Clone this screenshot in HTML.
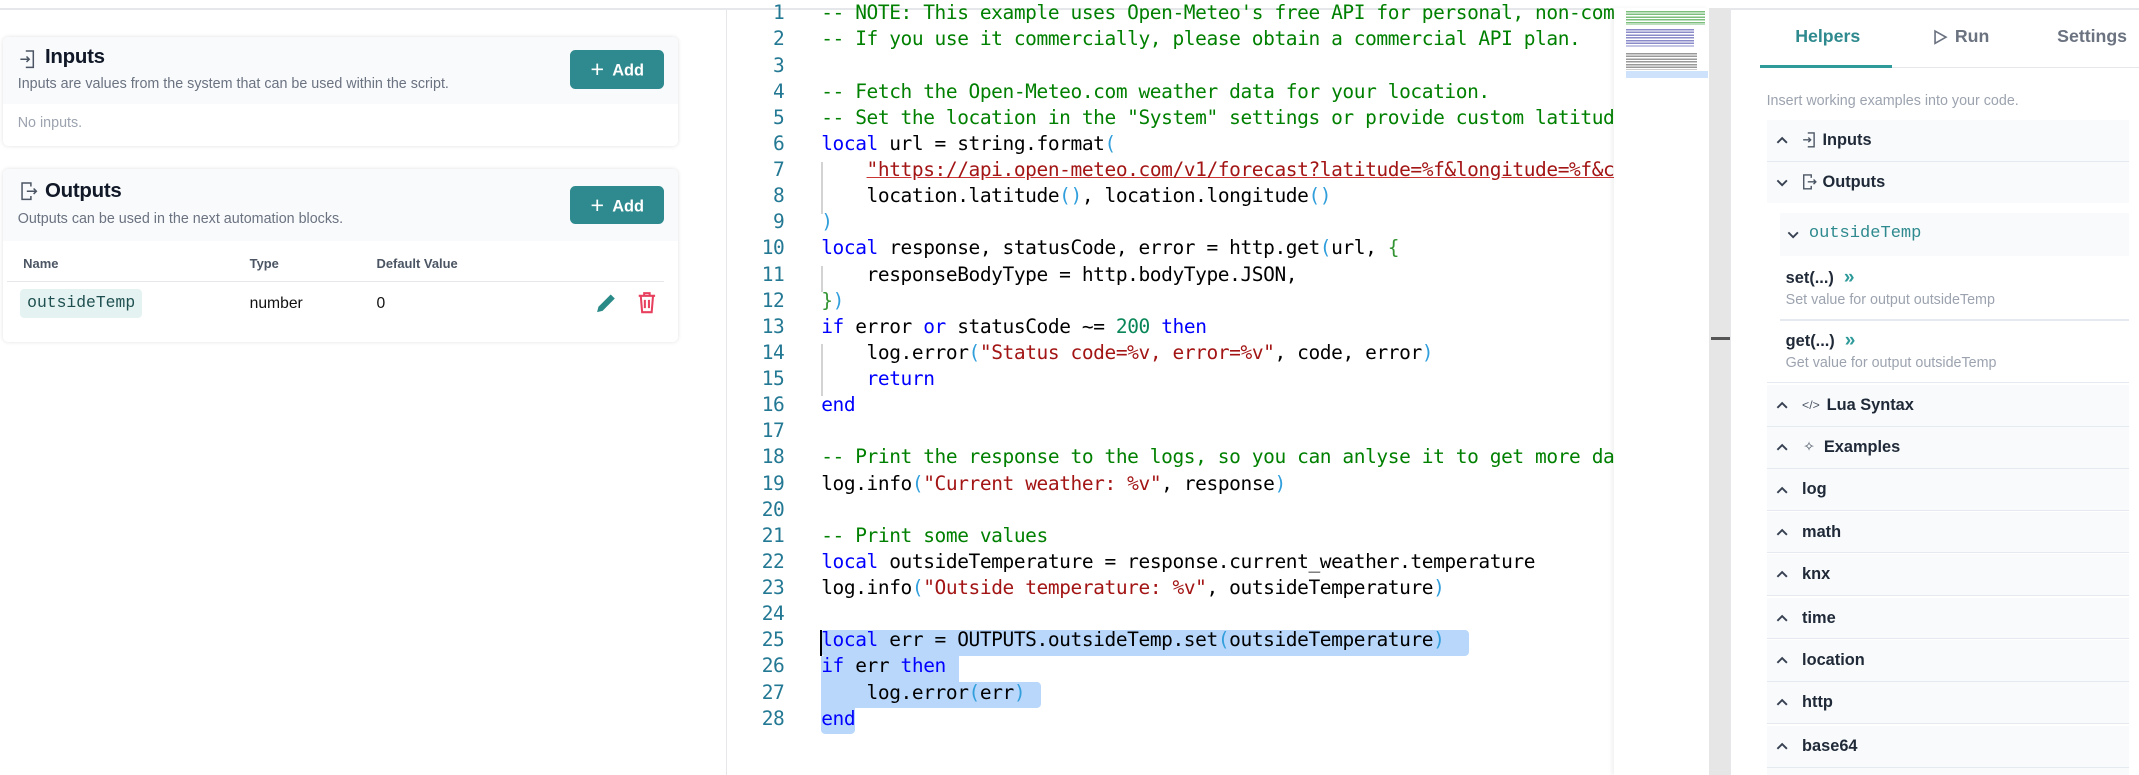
<!DOCTYPE html>
<html><head><meta charset="utf-8">
<style>
html,body{margin:0;padding:0;background:#fff;overflow:hidden}
body{width:2139px;height:775px}
#r{zoom:1.36416;width:1568px;height:568px;position:relative;font-family:"Liberation Sans",Arial,sans-serif;color:#1f2937}
.a{position:absolute}
.card{position:absolute;left:2px;width:495px;background:#fff;border-radius:4px;box-shadow:0 0 3px rgba(0,0,0,.12);overflow:hidden}
.ch{background:#f8fafc;position:relative}
.title{position:absolute;left:13px;font-size:15px;font-weight:600;color:#111827;letter-spacing:-.2px}
.sub{position:absolute;left:11px;font-size:10.5px;color:#6b7280}
.btn{position:absolute;left:416px;width:69px;height:28px;background:#2e8a8e;border-radius:4px;color:#fff;font-size:12px;font-weight:700;line-height:28px;text-align:center}
.btn span{font-size:17px;font-weight:400;vertical-align:-1px;margin-right:6px}
.code{position:absolute;left:533px;top:0;width:650px;height:568px;overflow:hidden;font-family:"DejaVu Sans Mono","Liberation Mono",monospace;font-size:14.3px;letter-spacing:-0.3px}
.ln{position:absolute;left:0;width:42px;text-align:right;color:#237893}
.cl{position:absolute;left:69px;white-space:pre;color:#000}
.c{color:#008000}.k{color:#0000ff}.s{color:#a31515}.n{color:#098658}.b{color:#319fdc}.b2{color:#319331}
.sel{position:absolute;left:602px;background:#b9d7fb;height:19px}
.guide{position:absolute;left:602px;width:1px;background:#d3d3d3}
.acc{position:absolute;left:1295px;width:266px;height:30px;background:#f8fafc;border-bottom:1px solid #e5eaf0;font-size:12px;font-weight:700;color:#1f2937;line-height:30px}
.acc .t{position:absolute;left:26px}
.up,.dn{position:absolute;left:7px;top:12px}
</style></head><body><div id="r">
<div class="a" style="left:0;top:6px;width:1568px;height:1px;background:#e5e7eb"></div>
<div class="a" style="left:532px;top:6px;width:1px;height:562px;background:#e5e7eb"></div>

<div class="card" style="top:27px;height:80px">
 <div class="ch" style="height:49px">
  <svg class="a" style="left:12px;top:9px" width="13" height="15" viewBox="0 0 13 15" fill="none" stroke="#4b5563" stroke-width="1.1"><path d="M5 1.5h5.5v12H5M1 7.5h6.5M5.5 5.5l2 2-2 2"/></svg>
  <div class="title" style="left:31px;top:6px">Inputs</div>
  <div class="sub" style="top:29px">Inputs are values from the system that can be used within the script.</div>
  <div class="btn" style="top:10px"><span>+</span>Add</div>
 </div>
 <div class="sub" style="top:57px;color:#9ca3af">No inputs.</div>
</div>

<div class="card" style="top:124px;height:127px">
 <div class="ch" style="height:53px">
  <svg class="a" style="left:13px;top:9px" width="13" height="15" viewBox="0 0 13 15" fill="none" stroke="#4b5563" stroke-width="1.1"><path d="M8 4V1.5H1.5v12H8V11M5 7.5h7M10 5.5l2 2-2 2"/></svg>
  <div class="title" style="left:31px;top:7px">Outputs</div>
  <div class="sub" style="top:31px">Outputs can be used in the next automation blocks.</div>
  <div class="btn" style="top:12px"><span>+</span>Add</div>
 </div>
 <div class="a" style="left:15px;top:64px;font-size:9.5px;font-weight:700;color:#4b5563">Name</div>
 <div class="a" style="left:181px;top:64px;font-size:9.5px;font-weight:700;color:#4b5563">Type</div>
 <div class="a" style="left:274px;top:64px;font-size:9.5px;font-weight:700;color:#4b5563">Default Value</div>
 <div class="a" style="left:3px;top:82px;width:482px;height:1px;background:#e5e7eb"></div>
 <div class="a" style="left:13px;top:88px;width:89px;height:21px;background:#e4f3f1;border-radius:3px;font-family:'Liberation Mono',monospace;font-size:12px;line-height:21px;text-align:center;color:#1f4f50">outsideTemp</div>
 <div class="a" style="left:181px;top:92px;font-size:11.5px;color:#111">number</div>
 <div class="a" style="left:274px;top:92px;font-size:11.5px;color:#111">0</div>
 <svg class="a" style="left:433px;top:88px" width="18" height="20" viewBox="0 0 18 20"><path d="M3 17l1-4 9-9 3 3-9 9z" fill="#2a8a88"/></svg>
 <svg class="a" style="left:464px;top:88px" width="16" height="20" viewBox="0 0 16 20" fill="none" stroke="#e8405f" stroke-width="1.5"><path d="M2 5h12M6 5V3h4v2M3.5 5l1 12h7l1-12M6.5 8v6M9.5 8v6"/></svg>
</div>

<div class="sel" style="top:462px;width:475px;border-radius:3px"></div>
<div class="sel" style="top:481px;width:101px"></div>
<div class="sel" style="top:500px;width:161px;border-radius:0 3px 3px 0"></div>
<div class="sel" style="top:519px;width:25px;border-radius:0 0 3px 3px"></div>
<div class="guide" style="top:119px;height:38px"></div>
<div class="guide" style="top:195px;height:19px"></div>
<div class="guide" style="top:252px;height:38px"></div>
<div class="a" style="left:601px;top:462px;width:1.5px;height:19px;background:#000"></div>
<div class="code" id="code"></div>
<script>
var L=[
'<span class="c">-- NOTE: This example uses Open-Meteo\'s free API for personal, non-commercial use.</span>',
'<span class="c">-- If you use it commercially, please obtain a commercial API plan.</span>',
'',
'<span class="c">-- Fetch the Open-Meteo.com weather data for your location.</span>',
'<span class="c">-- Set the location in the "System" settings or provide custom latitude</span>',
'<span class="k">local</span> url = string.format<span class="b">(</span>',
'    <span class="s" style="text-decoration:underline;text-decoration-color:#c33">"https://api.open-meteo.com/v1/forecast?latitude=%f&amp;longitude=%f&amp;current</span>',
'    location.latitude<span class="b">()</span>, location.longitude<span class="b">()</span>',
'<span class="b">)</span>',
'<span class="k">local</span> response, statusCode, error = http.get<span class="b">(</span>url, <span class="b2">{</span>',
'    responseBodyType = http.bodyType.JSON,',
'<span class="b2">}</span><span class="b">)</span>',
'<span class="k">if</span> error <span class="k">or</span> statusCode ~= <span class="n">200</span> <span class="k">then</span>',
'    log.error<span class="b">(</span><span class="s">"Status code=%v, error=%v"</span>, code, error<span class="b">)</span>',
'    <span class="k">return</span>',
'<span class="k">end</span>',
'',
'<span class="c">-- Print the response to the logs, so you can anlyse it to get more data</span>',
'log.info<span class="b">(</span><span class="s">"Current weather: %v"</span>, response<span class="b">)</span>',
'',
'<span class="c">-- Print some values</span>',
'<span class="k">local</span> outsideTemperature = response.current_weather.temperature',
'log.info<span class="b">(</span><span class="s">"Outside temperature: %v"</span>, outsideTemperature<span class="b">)</span>',
'',
'<span class="k">local</span> err = OUTPUTS.outsideTemp.set<span class="b">(</span>outsideTemperature<span class="b">)</span>',
'<span class="k">if</span> err <span class="k">then</span>',
'    log.error<span class="b">(</span>err<span class="b">)</span>',
'<span class="k">end</span>'];
var h='';for(var i=0;i<L.length;i++){var y=1+i*19.15;h+='<div class="ln" style="top:'+y+'px">'+(i+1)+'</div><div class="cl" style="top:'+y+'px">'+L[i]+'</div>';}
document.getElementById('code').innerHTML=h;
var up='<svg class="up" width="9" height="6" viewBox="0 0 9 6" fill="none" stroke="#374151" stroke-width="1.4"><path d="M1 5l3.5-3.5L8 5"/></svg>';
var dn='<svg class="dn" width="9" height="6" viewBox="0 0 9 6" fill="none" stroke="#374151" stroke-width="1.4"><path d="M1 1l3.5 3.5L8 1"/></svg>';
window.addEventListener('DOMContentLoaded',function(){document.querySelectorAll('.u').forEach(function(e){e.insertAdjacentHTML('afterbegin',up)});document.querySelectorAll('.d').forEach(function(e){e.insertAdjacentHTML('afterbegin',dn)});});
</script>
<div class="a" style="left:1183px;top:6px;width:70px;height:562px;background:#fff;box-shadow:-2px 0 3px rgba(0,0,0,.06)"></div>
<div class="a" style="left:1192px;top:8px;width:58px;height:10px;background:repeating-linear-gradient(#7cbf7c 0 1px,transparent 1px 2px)"></div>
<div class="a" style="left:1192px;top:21px;width:50px;height:14px;background:repeating-linear-gradient(#8a8ac8 0 1px,transparent 1px 2px)"></div>
<div class="a" style="left:1192px;top:39px;width:52px;height:12px;background:repeating-linear-gradient(#999 0 1px,transparent 1px 2px)"></div>
<div class="a" style="left:1192px;top:52px;width:60px;height:5px;background:#cfe2fb"></div>
<div class="a" style="left:1253px;top:6px;width:15px;height:562px;background:#e6e6e6"></div>
<div class="a" style="left:1254px;top:247px;width:14px;height:2px;background:#555"></div>
<div class="a" style="left:1268px;top:6px;width:1px;height:562px;background:#e5e7eb"></div>

<div class="a" style="left:1316px;top:19px;font-size:13px;font-weight:600;color:#2e8a8e">Helpers</div>
<svg class="a" style="left:1417px;top:21px" width="11" height="12" viewBox="0 0 11 12" fill="none" stroke="#6b7280" stroke-width="1.2"><path d="M1.5 1.5l8 4.5-8 4.5z"/></svg>
<div class="a" style="left:1433px;top:19px;font-size:13px;font-weight:600;color:#6b7280">Run</div>
<div class="a" style="left:1508px;top:19px;font-size:13px;font-weight:600;color:#6b7280">Settings</div>
<div class="a" style="left:1290px;top:49px;width:278px;height:1px;background:#e5e7eb"></div>
<div class="a" style="left:1290px;top:48px;width:97px;height:2px;background:#2e9a9a"></div>
<div class="a" style="left:1295px;top:68px;font-size:10.5px;color:#9ca3af">Insert working examples into your code.</div>

<div class="acc u" style="top:88px"><svg class="a" style="left:26px;top:8px" width="11" height="13" viewBox="0 0 13 15" fill="none" stroke="#4b5563" stroke-width="1.2"><path d="M5 1.5h5.5v12H5M1 7.5h6.5M5.5 5.5l2 2-2 2"/></svg><span class="t" style="left:41px">Inputs</span></div>
<div class="acc d" style="top:119px;border-bottom:none"><svg class="a" style="left:26px;top:8px" width="11" height="13" viewBox="0 0 13 15" fill="none" stroke="#4b5563" stroke-width="1.2"><path d="M8 4V1.5H1.5v12H8V11M5 7.5h7M10 5.5l2 2-2 2"/></svg><span class="t" style="left:41px">Outputs</span></div>
<div class="a" style="left:1305px;top:156px;width:256px;height:32px;background:#f8fafc;line-height:30px"><svg class="a" style="left:5px;top:13px" width="9" height="6" viewBox="0 0 9 6" fill="none" stroke="#374151" stroke-width="1.4"><path d="M1 1l3.5 3.5L8 1"/></svg><span class="a" style="left:21px;top:1px;font-family:'Liberation Mono',monospace;font-size:12.5px;color:#2e8a8e">outsideTemp</span></div>
<div class="a" style="left:1309px;top:196px;font-size:12px;font-weight:700;color:#1f2937">set(...) <span style="color:#2e9a9a;font-size:14px;margin-left:4px">»</span></div>
<div class="a" style="left:1309px;top:214px;font-size:10.5px;color:#9ca3af">Set value for output outsideTemp</div>
<div class="a" style="left:1305px;top:234px;width:256px;height:1px;background:#e5eaf0"></div>
<div class="a" style="left:1309px;top:242px;font-size:12px;font-weight:700;color:#1f2937">get(...) <span style="color:#2e9a9a;font-size:14px;margin-left:4px">»</span></div>
<div class="a" style="left:1309px;top:260px;font-size:10.5px;color:#9ca3af">Get value for output outsideTemp</div>
<div class="a" style="left:1295px;top:280px;width:266px;height:1px;background:#e5eaf0"></div>

<div class="acc u" style="top:282px"><span class="a" style="left:26px;font-size:9px;font-weight:400;color:#4b5563">&lt;/&gt;</span><span class="t" style="left:44px">Lua Syntax</span></div>
<div class="acc u" style="top:313px"><span class="a" style="left:27px;font-size:10px;font-weight:400;color:#4b5563">✧</span><span class="t" style="left:42px">Examples</span></div>
<div class="acc u" style="top:344px"><span class="t">log</span></div>
<div class="acc u" style="top:375px"><span class="t">math</span></div>
<div class="acc u" style="top:406px"><span class="t">knx</span></div>
<div class="acc u" style="top:438px"><span class="t">time</span></div>
<div class="acc u" style="top:469px"><span class="t">location</span></div>
<div class="acc u" style="top:500px"><span class="t">http</span></div>
<div class="acc u" style="top:532px"><span class="t">base64</span></div>
<div class="acc" style="top:563px"></div>
</div></body></html>
